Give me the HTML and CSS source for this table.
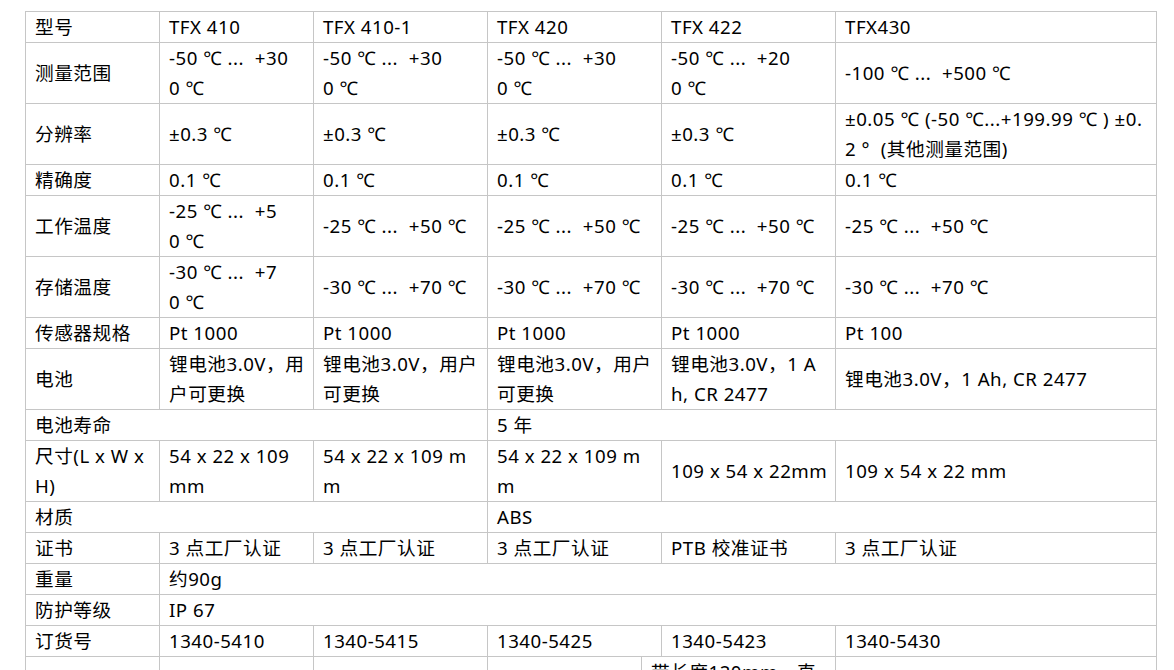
FILE: index.html
```html
<!DOCTYPE html>
<html lang="zh-CN">
<head>
<meta charset="utf-8">
<title>TFX 规格</title>
<link rel="stylesheet" href="styles.css">
</head>
<body>
<div class="page">
<table class="spec">
  <colgroup>
    <col class="c0"><col class="c1"><col class="c2"><col class="c3a"><col class="c3b"><col class="c4"><col class="c5">
  </colgroup>
  <tbody>
    <tr><td>型号</td><td>TFX 410</td><td>TFX 410-1</td><td colspan="2">TFX 420</td><td>TFX 422</td><td>TFX430</td></tr>
    <tr><td>测量范围</td><td>-50 ℃ ...&nbsp; +30<br>0 ℃</td><td>-50 ℃ ...&nbsp; +30<br>0 ℃</td><td colspan="2">-50 ℃ ...&nbsp; +30<br>0 ℃</td><td>-50 ℃ ...&nbsp; +20<br>0 ℃</td><td>-100 ℃ ...&nbsp; +500 ℃</td></tr>
    <tr><td>分辨率</td><td>±0.3 ℃</td><td>±0.3 ℃</td><td colspan="2">±0.3 ℃</td><td>±0.3 ℃</td><td>±0.05 ℃ (-50 ℃...+199.99 ℃ ) ±0.<br>2 °&nbsp; (其他测量范围)</td></tr>
    <tr><td>精确度</td><td>0.1 ℃</td><td>0.1 ℃</td><td colspan="2">0.1 ℃</td><td>0.1 ℃</td><td>0.1 ℃</td></tr>
    <tr><td>工作温度</td><td>-25 ℃ ...&nbsp; +5<br>0 ℃</td><td>-25 ℃ ...&nbsp; +50 ℃</td><td colspan="2">-25 ℃ ...&nbsp; +50 ℃</td><td>-25 ℃ ...&nbsp; +50 ℃</td><td>-25 ℃ ...&nbsp; +50 ℃</td></tr>
    <tr><td>存储温度</td><td>-30 ℃ ...&nbsp; +7<br>0 ℃</td><td>-30 ℃ ...&nbsp; +70 ℃</td><td colspan="2">-30 ℃ ...&nbsp; +70 ℃</td><td>-30 ℃ ...&nbsp; +70 ℃</td><td>-30 ℃ ...&nbsp; +70 ℃</td></tr>
    <tr><td>传感器规格</td><td>Pt 1000</td><td>Pt 1000</td><td colspan="2">Pt 1000</td><td>Pt 1000</td><td>Pt 100</td></tr>
    <tr><td>电池</td><td>锂电池3.0V，用<br>户可更换</td><td>锂电池3.0V，用户<br>可更换</td><td colspan="2">锂电池3.0V，用户<br>可更换</td><td>锂电池3.0V，1 A<br>h, CR 2477</td><td>锂电池3.0V，1 Ah, CR 2477</td></tr>
    <tr><td colspan="3">电池寿命</td><td colspan="4">5 年</td></tr>
    <tr><td>尺寸(L x W x<br>H)</td><td>54 x 22 x 109<br>mm</td><td>54 x 22 x 109 m<br>m</td><td colspan="2">54 x 22 x 109 m<br>m</td><td>109 x 54 x 22mm</td><td>109 x 54 x 22 mm</td></tr>
    <tr><td colspan="3">材质</td><td colspan="4">ABS</td></tr>
    <tr><td>证书</td><td>3 点工厂认证</td><td>3 点工厂认证</td><td colspan="2">3 点工厂认证</td><td>PTB 校准证书</td><td>3 点工厂认证</td></tr>
    <tr><td>重量</td><td colspan="6">约90g</td></tr>
    <tr><td>防护等级</td><td colspan="6">IP 67</td></tr>
    <tr><td>订货号</td><td>1340-5410</td><td>1340-5415</td><td colspan="2">1340-5425</td><td>1340-5423</td><td>1340-5430</td></tr>
    <tr class="last"><td></td><td></td><td></td><td></td><td colspan="2">带长度120mm，直<br>径3mm的探头</td><td></td></tr>
  </tbody>
</table>
</div>
</body>
</html>
```

FILE: styles.css
```css
html {
  overflow: hidden;
  background: #fff;
}
body {
  margin: 0;
  font-family: "Noto Sans", "Noto Sans CJK SC", sans-serif;
  font-size: 18.67px;
  letter-spacing: 0.5px;
  color: #000;
}
.page {
  padding: 11px 0 0 25px;
}
.spec {
  border-collapse: collapse;
  table-layout: fixed;
  width: 1131px;
}
.c0 { width: 134px; }
.c1 { width: 154px; }
.c2 { width: 174px; }
.c3a { width: 154px; }
.c3b { width: 20px; }
.c4 { width: 174px; }
.c5 { width: 321px; }
.spec td {
  border: 1px solid #c6c6c6;
  padding: 0 9px;
  line-height: 30px;
  height: 30px;
  vertical-align: middle;
  white-space: nowrap;
  overflow: visible;
}
.spec tr.last td {
  vertical-align: top;
}
```
